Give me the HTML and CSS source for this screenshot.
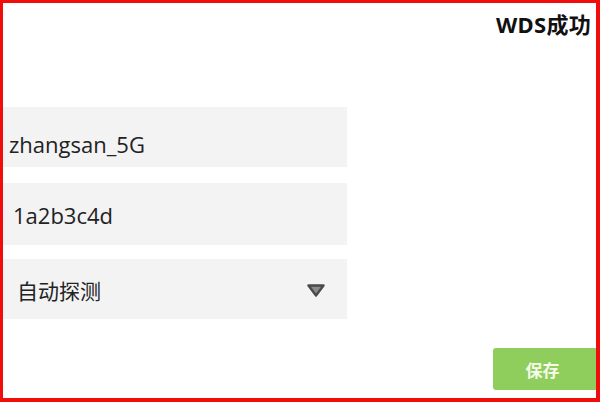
FILE: index.html
```html
<!DOCTYPE html>
<html lang="zh-CN">
<head>
<meta charset="utf-8">
<link rel="stylesheet" href="styles.css">
</head>
<body>
<div class="frame">
  <div class="header"><span class="title">WDS成功</span></div>
  <div class="form">
    <div class="field field-ssid">zhangsan_5G</div>
    <div class="field field-pass">1a2b3c4d</div>
    <div class="field field-select">
      <span class="select-text">自动探测</span>
      <svg class="arrow" width="18" height="13" viewBox="0 0 18 13">
        <path d="M1.5 1.5 L16.5 1.5 L9 11.5 Z" fill="#8a8a8a" stroke="#4a4a4a" stroke-width="2.4" stroke-linejoin="round"/>
      </svg>
    </div>
  </div>
  <div class="footer"><button class="save">保存</button></div>
</div>
</body>
</html>
```
FILE: styles.css
```css
html, body {
  margin: 0;
  padding: 0;
  background: #ffffff;
}
.frame {
  width: 600px;
  height: 402px;
  box-sizing: border-box;
  border: 3px solid #f20d0d;
  border-right-width: 4px;
  border-bottom-width: 4px;
  display: flex;
  flex-direction: column;
  font-family: "Open Sans", "Noto Sans CJK SC", sans-serif;
  background: #fff;
}
.header {
  display: flex;
  justify-content: flex-end;
  padding: 6px 5px 0 0;
  height: 32px;
}
.title {
  font-family: "Noto Sans", "Noto Sans CJK SC", sans-serif;
  font-weight: 700;
  font-size: 22px;
  line-height: 30px;
  letter-spacing: 0.3px;
  color: #111;
}
.form {
  width: 344px;
  margin-top: 66px;
  display: flex;
  flex-direction: column;
  gap: 16px;
}
.field {
  height: 60px;
  background: #f3f3f3;
  display: flex;
  align-items: center;
  font-size: 22px;
  color: #222;
  padding-top: 2px;
  box-sizing: border-box;
}
.field-ssid { padding-left: 6px; padding-top: 14px; }
.field-pass { padding-left: 10px; height: 62px; }
.field-select {
  padding-left: 14px;
  padding-right: 22px;
  justify-content: space-between;
  margin-top: -2px;
}
.select-text {
  font-family: "Noto Sans CJK SC", sans-serif;
  font-size: 21px;
  color: #222;
}
.arrow { display: block; }
.footer {
  margin-top: auto;
  display: flex;
  justify-content: flex-end;
  padding-bottom: 8px;
}
.save {
  width: 103px;
  height: 42px;
  border: none;
  border-radius: 3px 0 0 3px;
  background: #8fcd5c;
  color: #f4fbe9;
  font-family: "Noto Sans CJK SC", sans-serif;
  font-weight: 700;
  font-size: 17px;
  padding: 0 4px 0 0;
}
```
